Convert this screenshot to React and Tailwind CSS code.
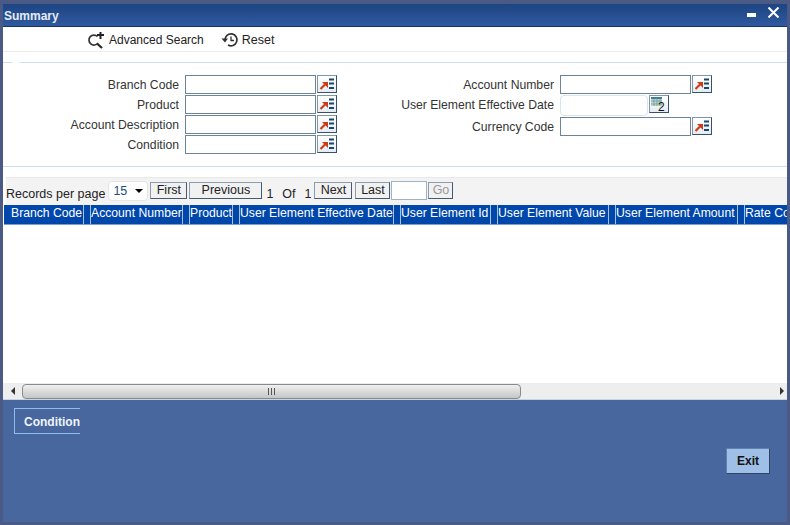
import React from 'react';

const font = { fontFamily: '"Liberation Sans", Arial, sans-serif' };

function LovIcon() {
  return (
    <svg width="16" height="14" viewBox="0 0 16 14">
      <path d="M1.5 12 L6 7.5" stroke="#cf3a16" strokeWidth="2.2" />
      <path d="M3 5 H9 V11 Z" fill="#cf3a16" />
      <path d="M10 2.5 H15 M10 6.5 H15 M10 11 H15" stroke="#17466f" strokeWidth="2" />
    </svg>
  );
}

function CalendarIcon() {
  return (
    <svg width="18" height="16" viewBox="0 0 18 16">
      <rect x="1" y="1" width="11" height="9" fill="#bcd5e0" />
      <rect x="1" y="1" width="11" height="2" fill="#3f7fa6" />
      <path d="M1 5 H12 M1 8 H12 M4 3 V10 M7 3 V10 M10 3 V10" stroke="#7fa98a" strokeWidth="1" />
      <text x="8" y="14.5" fontSize="12" fill="#111" fontFamily="Liberation Sans">2</text>
    </svg>
  );
}

function IconBtn({ children }) {
  return (
    <button className="w-5 h-[18px] ml-px flex items-center justify-center bg-gradient-to-b from-white to-[#e4edf3] border border-[#7f97a8] border-b-[#39506a] border-r-[#39506a]">
      {children}
    </button>
  );
}

function Field({ label, wide = true, icon = <LovIcon />, className = 'h-5' }) {
  return (
    <div className={`flex items-start ${className}`}>
      <label className="w-[181px] pr-1.5 text-right text-[12.2px] leading-[20px] text-[#333] whitespace-nowrap">{label}</label>
      <input
        className={wide ? 'w-[131px] h-[19px] bg-white border border-[#6b8499]' : 'w-[88px] h-[21px] bg-white border border-[#dbe4ea] rounded-sm'}
        readOnly
      />
      <IconBtn>{icon}</IconBtn>
    </div>
  );
}

function PageBtn({ children, className = '', disabled }) {
  return (
    <button className={`mt-px h-[17px] bg-[#f1f1f1] border border-[#8d9cae] border-b-[#47596f] border-r-[#47596f] text-[12.5px] leading-none ${disabled ? 'text-[#999]' : 'text-[#222]'} ${className}`}>
      {children}
    </button>
  );
}

function HeaderCell({ label, width, pad = 'pl-0' }) {
  return (
    <div className="flex h-full shrink-0">
      <div style={{ width }} className={`h-full overflow-hidden whitespace-nowrap ${pad} text-[12.2px] leading-[16px] text-white`}>
        {label}
      </div>
      <div className="w-px h-full bg-[#a9c1e0]" />
      <div className="w-[6px] h-full" />
      <div className="w-px h-full bg-[#a9c1e0]" />
    </div>
  );
}

export default function App() {
  return (
    <div style={font} className="w-[790px] h-[525px] overflow-hidden bg-[#4a5a85] pt-1 pl-[3px] pr-[3px] pb-[3px] flex flex-col">
      {/* Title bar */}
      <div className="h-[23px] shrink-0 flex items-center justify-between bg-gradient-to-b from-[#1d4583] to-[#30599f] border-b border-[#16345f]">
        <span className="pl-px pt-px text-[12px] font-bold text-[#e4ecf6]">Summary</span>
        <div className="flex items-start h-full">
          <div className="w-[9px] h-1 mt-[9px] mr-[12px] bg-white" />
          <svg width="11" height="11" viewBox="0 0 11 11" className="mr-2 mt-[3px]">
            <path d="M0.5 0.5 L10.5 10.5 M10.5 0.5 L0.5 10.5" stroke="#fff" strokeWidth="2" />
          </svg>
        </div>
      </div>

      {/* Toolbar */}
      <div className="h-[25px] shrink-0 bg-white border-b border-[#ececec] flex items-center pt-px pl-[84px] text-[#222]">
        <svg width="18" height="18" viewBox="0 0 18 18" className="mr-[4px]">
          <path d="M10.5 5.5 A5 5 0 1 0 11 12" fill="none" stroke="#333" strokeWidth="1.7" />
          <path d="M10.5 13 L15 17" stroke="#222" strokeWidth="2.2" />
          <path d="M10 4 H17 M13.5 1 V8" stroke="#222" strokeWidth="2" />
        </svg>
        <span className="text-[12px] leading-[16px]">Advanced Search</span>
        <svg width="18" height="16" viewBox="0 0 18 16" className="ml-[17px] mr-[3px]">
          <path d="M4 8 A6 6 0 1 1 7 13" fill="none" stroke="#333" strokeWidth="1.7" />
          <path d="M0.5 6.5 H7 L4 10.5 Z" fill="#333" />
          <path d="M10 4.5 V8.5 H13" fill="none" stroke="#333" strokeWidth="1.3" />
        </svg>
        <span className="text-[12.5px] leading-[16px]">Reset</span>
      </div>

      {/* Search form */}
      <div className="h-[114px] shrink-0 bg-white pt-[10px]">
        <div className="flex h-px">
          <div className="w-[9px] bg-[#cfdde5]" />
          <div className="w-2 bg-white" />
          <div className="flex-1 bg-[#cfdde5]" />
        </div>
        <div className="flex pt-3 pl-px">
          <div className="w-[375px]">
            <Field label="Branch Code" />
            <Field label="Product" />
            <Field label="Account Description" />
            <Field label="Condition" />
          </div>
          <div>
            <Field label="Account Number" />
            <Field label="User Element Effective Date" wide={false} icon={<CalendarIcon />} className="h-[22px]" />
            <Field label="Currency Code" />
          </div>
        </div>
      </div>

      {/* Paging bar */}
      <div className="flex-1 min-h-0 bg-white flex flex-col">
        <div className="h-px shrink-0 bg-[#cfdde5]" />
        <div className="h-[10px] shrink-0 bg-white" />
        <div className="h-[28px] shrink-0 ml-[3px] bg-[#f3f3f3] border-t border-[#e9e9e9] flex items-start pt-[3px] text-[#222]">
          <span className="mt-[6px] text-[12.5px] leading-[15px] whitespace-nowrap">Records per page</span>
          <div className="ml-[3px] w-10 h-5 bg-white border border-[#e5e5e5] rounded-sm flex items-center justify-between px-1 text-[#1e4d7c] text-[12.5px]">
            15
            <span className="w-0 h-0 border-l-4 border-r-4 border-t-4 border-l-transparent border-r-transparent border-t-black" />
          </div>
          <PageBtn className="ml-[2px] w-[37px]">First</PageBtn>
          <PageBtn className="ml-[2px] w-[73px]">Previous</PageBtn>
          <span className="ml-[4px] mt-[6px] leading-[15px] text-[12.5px] whitespace-nowrap">1</span>
          <span className="ml-[9px] mt-[6px] leading-[15px] text-[12.5px] whitespace-nowrap">Of</span>
          <span className="ml-[9px] mt-[6px] leading-[15px] text-[12.5px] whitespace-nowrap">1</span>
          <PageBtn className="ml-[3px] w-[38px]">Next</PageBtn>
          <PageBtn className="ml-[3px] w-[35px]">Last</PageBtn>
          <input readOnly className="ml-px w-[36px] h-[19px] bg-white border border-[#9fb3c4]" />
          <PageBtn className="ml-px w-[25px]" disabled>Go</PageBtn>
        </div>

        {/* Results table */}
        <div className="h-5 shrink-0 ml-px bg-[#0047ab] flex overflow-hidden border-b border-[#7f9ccc]">
          <HeaderCell label="Branch Code" width={79} pad="pl-[7px]" />
          <HeaderCell label="Account Number" width={91} />
          <HeaderCell label="Product" width={42} />
          <HeaderCell label="User Element Effective Date" width={153} />
          <HeaderCell label="User Element Id" width={89} />
          <HeaderCell label="User Element Value" width={110} />
          <HeaderCell label="User Element Amount" width={121} />
          <HeaderCell label="Rate Code" width={60} />
        </div>
        <div className="flex-1 bg-white" />

        {/* Horizontal scrollbar */}
        <div className="h-[17px] shrink-0 bg-[#eeeeee] flex items-center border-b border-[#c9d3e2]">
          <div className="w-[19px] flex justify-center">
            <span className="w-0 h-0 border-t-[4px] border-b-[4px] border-r-[4px] border-t-transparent border-b-transparent border-r-[#333]" />
          </div>
          <div className="w-[499px] h-[15px] rounded-sm border border-[#8a8a8a] bg-gradient-to-b from-[#f0f0f0] to-[#c6c6c6] flex items-center justify-center gap-[2px]">
            <span className="w-px h-[7px] bg-[#555]" />
            <span className="w-px h-[7px] bg-[#555]" />
            <span className="w-px h-[7px] bg-[#555]" />
          </div>
          <div className="flex-1 flex justify-end pr-[3px]">
            <span className="w-0 h-0 border-t-[4px] border-b-[4px] border-l-[4px] border-t-transparent border-b-transparent border-l-[#333]" />
          </div>
        </div>
      </div>

      {/* Footer */}
      <div className="h-[122px] shrink-0 bg-[#47679e] flex justify-between pl-[11px] pr-[17px]">
        <div className="mt-2 w-[66px] h-[26px] border border-r-0 border-[#8fbcf0] pl-[9px] text-[12px] font-bold leading-[26px] text-[#eef4fb]">
          Condition
        </div>
        <button className="mt-[48px] w-[44px] h-[26px] bg-[#a0bfe6] border border-[#5f82b2] border-b-[#2c4468] border-r-[#2c4468] text-[12px] font-bold text-[#111]">
          Exit
        </button>
      </div>
    </div>
  );
}
